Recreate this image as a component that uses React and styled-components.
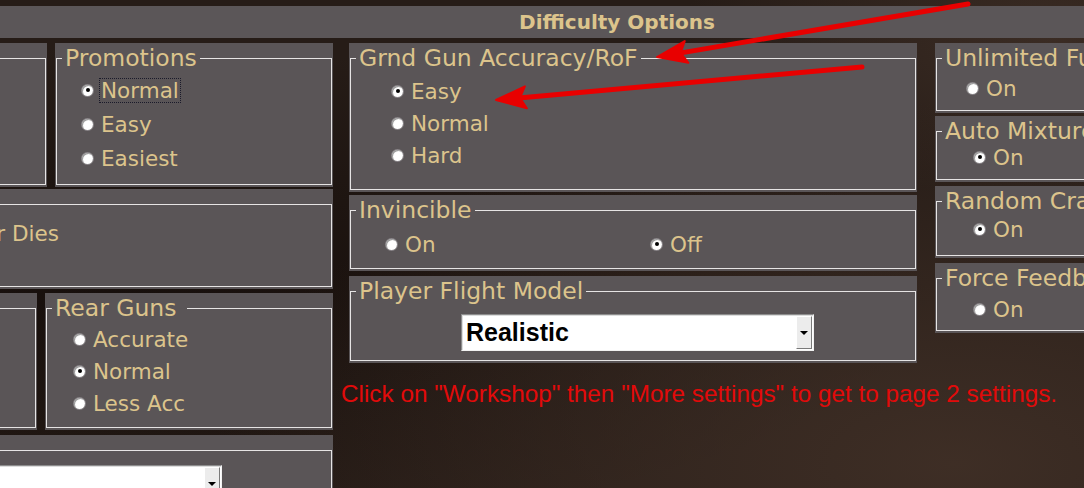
import React from 'react';
import styled, { createGlobalStyle } from 'styled-components';

const TAN = '#dcc48c';
const PANEL = '#5a5557';

const GlobalStyle = createGlobalStyle`
  html, body {
    margin: 0;
    padding: 0;
  }

  body {
    width: 1084px;
    height: 488px;
    overflow: hidden;
    background: #221814;
    font-family: "DejaVu Sans", "Noto Sans", sans-serif;
  }
`;

const Screen = styled.div`
  position: relative;
  width: 1084px;
  height: 488px;
  overflow: hidden;
  background:
    radial-gradient(ellipse at 88% 95%, rgba(70, 52, 42, 0.75) 0%, rgba(70, 52, 42, 0) 55%),
    radial-gradient(ellipse at 97% 8%, rgba(72, 54, 44, 0.6) 0%, rgba(72, 54, 44, 0) 25%),
    radial-gradient(ellipse at 10% 60%, #170f0c 0%, rgba(23, 15, 12, 0) 60%),
    #261c17;
`;

const Header = styled.div`
  margin-top: 6px;
  height: 32px;
  padding-left: 150px;
  background: #5b5658;
  color: ${TAN};
  font-size: 20px;
  font-weight: 700;
  display: flex;
  align-items: center;
  justify-content: center;
`;

const Columns = styled.div`
  display: flex;
  align-items: flex-start;
  margin-top: 5px;
`;

const LeftGroup = styled.div`
  width: 333px;
  flex: none;
  display: flex;
  flex-direction: column;
`;

const MidGroup = styled.div`
  width: 568px;
  margin-left: 16px;
  flex: none;
  display: flex;
  flex-direction: column;
`;

const RightGroup = styled.div`
  width: 260px;
  margin-left: 18px;
  flex: none;
  display: flex;
  flex-direction: column;
`;

const Row = styled.div`
  display: flex;
  gap: 8px;
  margin-top: ${(p) => p.$top || 0}px;
`;

const Panel = styled.div`
  box-sizing: border-box;
  display: flex;
  flex: ${(p) => (p.$grow ? '1 1 0' : 'none')};
  height: ${(p) => p.$h}px;
  width: ${(p) => (p.$w ? `${p.$w}px` : 'auto')};
  margin-top: ${(p) => p.$top || 0}px;
  padding: 2px 1px 2px ${(p) => (p.$clipped ? 0 : 1)}px;
  background: ${PANEL};
`;

const Frame = styled.fieldset`
  flex: 1;
  min-width: 0;
  margin: ${(p) => (p.$untitled ? 13 : 0)}px 0 0 0;
  padding: 0;
  border: 1px solid #e6e4e4;
  border-left: ${(p) => (p.$clipped ? 'none' : '1px solid #e6e4e4')};
  display: flex;
  flex-direction: column;
`;

const Legend = styled.legend`
  margin-left: 5px;
  padding: 0 3px;
  color: ${TAN};
  font-size: 23.5px;
  line-height: 26px;
  white-space: nowrap;
`;

const OptionList = styled.div`
  display: flex;
  flex-direction: column;
  padding-top: ${(p) => p.$top || 0}px;
  padding-left: ${(p) => p.$left || 0}px;
`;

const OptionGrid = styled.div`
  display: grid;
  grid-template-columns: 265px auto;
  padding-top: 2px;
  padding-left: ${(p) => p.$left || 0}px;
`;

const OptionRow = styled.label`
  display: flex;
  align-items: center;
  gap: 7px;
  height: ${(p) => p.$h || 32}px;
  color: ${TAN};
  font-size: 21.5px;
  white-space: nowrap;
`;

const ClippedRow = styled(OptionRow)`
  width: 60px;
  justify-content: flex-end;
`;

const Radio = styled.span`
  flex: none;
  width: 11px;
  height: 11px;
  border-radius: 50%;
  display: flex;
  align-items: center;
  justify-content: center;
  background: radial-gradient(circle at 60% 60%, #ffffff 45%, #e2e2e2 100%);
  box-shadow: inset 1px 1px 0 #9a9a9a, 0 0 0 1px #8a8689;

  &::after {
    content: '';
    display: ${(p) => (p.$on ? 'block' : 'none')};
    width: 4px;
    height: 4px;
    border-radius: 50%;
    background: #000;
  }
`;

const Text = styled.span`
  padding: 0 1px;
  line-height: 23px;
  outline: ${(p) => (p.$focused ? '1px dotted #1a1a2a' : 'none')};
`;

const SelectBox = styled.div`
  box-sizing: border-box;
  display: flex;
  width: ${(p) => p.$w}px;
  height: 37px;
  margin-top: ${(p) => p.$top || 0}px;
  margin-left: ${(p) => p.$left || 0}px;
  background: #fff;
  border: 1px solid;
  border-color: #8c8c8c #f2f2f2 #f2f2f2 #8c8c8c;
  box-shadow: inset 1px 1px 0 #dcdcdc;
`;

const SelectValue = styled.div`
  flex: 1;
  padding-left: 4px;
  display: flex;
  align-items: center;
  color: #000;
  font-family: "Liberation Sans", Arial, sans-serif;
  font-size: 25px;
  font-weight: 700;
`;

const DropButton = styled.div`
  box-sizing: border-box;
  width: 16px;
  margin: 1px 1px 1px 0;
  display: flex;
  align-items: center;
  justify-content: center;
  background: #ececec;
  border: 1px solid;
  border-color: #ffffff #7a7a7a #7a7a7a #ffffff;

  &::after {
    content: '';
    border-left: 4px solid transparent;
    border-right: 4px solid transparent;
    border-top: 4px solid #000;
  }
`;

const Note = styled.div`
  margin-top: 18px;
  margin-left: -8px;
  color: #e20a0a;
  font-family: "Liberation Sans", Arial, sans-serif;
  font-size: 24.3px;
  line-height: 26px;
  white-space: nowrap;
`;

const Annotations = styled.svg`
  position: absolute;
  left: 0;
  top: 0;
  pointer-events: none;
`;

const Option = ({ label, on, focused, h }) => (
  <OptionRow $h={h}>
    <Radio $on={on} />
    <Text $focused={focused}>{label}</Text>
  </OptionRow>
);

const Select = ({ value, width, top, left }) => (
  <SelectBox $w={width} $top={top} $left={left}>
    <SelectValue>{value}</SelectValue>
    <DropButton />
  </SelectBox>
);

// red call-out arrow: shaft from tail to the base of a filled head at tip
const Arrow = ({ from, to }) => {
  const dx = to[0] - from[0];
  const dy = to[1] - from[1];
  const len = Math.hypot(dx, dy);
  const ux = dx / len;
  const uy = dy / len;
  const bx = to[0] - ux * 30;
  const by = to[1] - uy * 30;
  const nx = -uy * 11;
  const ny = ux * 11;
  return (
    <g fill="#e80000" stroke="#e80000">
      <line x1={from[0]} y1={from[1]} x2={bx + ux * 4} y2={by + uy * 4} strokeWidth="5" strokeLinecap="round" />
      <polygon
        points={`${to[0]},${to[1]} ${bx + nx},${by + ny} ${bx + ux * 6},${by + uy * 6} ${bx - nx},${by - ny}`}
        strokeWidth="2"
        strokeLinejoin="round"
      />
    </g>
  );
};

const App = () => (
  <Screen>
    <GlobalStyle />
    <Header>Difficulty Options</Header>
    <Columns>
      <LeftGroup>
        <Row>
          <Panel $h={144} $w={47} $clipped>
            <Frame $untitled $clipped />
          </Panel>
          <Panel $h={144} $grow>
            <Frame>
              <Legend>Promotions</Legend>
              <OptionList $top={2} $left={25}>
                <Option label="Normal" on focused h={34} />
                <Option label="Easy" h={34} />
                <Option label="Easiest" h={34} />
              </OptionList>
            </Frame>
          </Panel>
        </Row>
        <Panel $h={100} $top={2} $clipped>
          <Frame $untitled $clipped>
            <OptionList $top={16}>
              <ClippedRow $h={24}>
                <Radio />
                <Text>End When Player Dies</Text>
              </ClippedRow>
            </OptionList>
          </Frame>
        </Panel>
        <Row $top={4}>
          <Panel $h={137} $w={37} $clipped>
            <Frame $untitled $clipped />
          </Panel>
          <Panel $h={137} $grow>
            <Frame>
              <Legend>Rear Guns&nbsp;</Legend>
              <OptionList $top={2} $left={27}>
                <Option label="Accurate" />
                <Option label="Normal" on />
                <Option label="Less Acc" />
              </OptionList>
            </Frame>
          </Panel>
        </Row>
        <Panel $h={80} $top={5} $clipped>
          <Frame $untitled $clipped>
            <Select value="" width={226} top={14} left={-4} />
          </Frame>
        </Panel>
      </LeftGroup>

      <MidGroup>
        <Panel $h={149}>
          <Frame>
            <Legend>Grnd Gun Accuracy/RoF</Legend>
            <OptionList $top={4} $left={41}>
              <Option label="Easy" on />
              <Option label="Normal" />
              <Option label="Hard" />
            </OptionList>
          </Frame>
        </Panel>
        <Panel $h={76} $top={3}>
          <Frame>
            <Legend>Invincible</Legend>
            <OptionGrid $left={35}>
              <Option label="On" h={38} />
              <Option label="Off" on h={38} />
            </OptionGrid>
          </Frame>
        </Panel>
        <Panel $h={87} $top={5}>
          <Frame>
            <Legend>Player Flight Model</Legend>
            <Select value="Realistic" width={353} top={10} left={110} />
          </Frame>
        </Panel>
        <Note>Click on "Workshop" then "More settings" to get to page 2 settings.</Note>
      </MidGroup>

      <RightGroup>
        <Panel $h={70}>
          <Frame>
            <Legend>Unlimited Fuel</Legend>
            <OptionList $top={4} $left={30}>
              <Option label="On" h={26} />
            </OptionList>
          </Frame>
        </Panel>
        <Panel $h={66} $top={3}>
          <Frame>
            <Legend>Auto Mixture</Legend>
            <OptionList $left={37}>
              <Option label="On" on h={26} />
            </OptionList>
          </Frame>
        </Panel>
        <Panel $h={72} $top={4}>
          <Frame>
            <Legend>Random Crashes</Legend>
            <OptionList $top={2} $left={37}>
              <Option label="On" on h={26} />
            </OptionList>
          </Frame>
        </Panel>
        <Panel $h={70} $top={5}>
          <Frame>
            <Legend>Force Feedback</Legend>
            <OptionList $top={5} $left={37}>
              <Option label="On" h={26} />
            </OptionList>
          </Frame>
        </Panel>
      </RightGroup>
    </Columns>

    <Annotations width="1084" height="488" viewBox="0 0 1084 488">
      <Arrow from={[968, 4]} to={[657, 57]} />
      <Arrow from={[862, 67]} to={[496, 100]} />
    </Annotations>
  </Screen>
);

export default App;
